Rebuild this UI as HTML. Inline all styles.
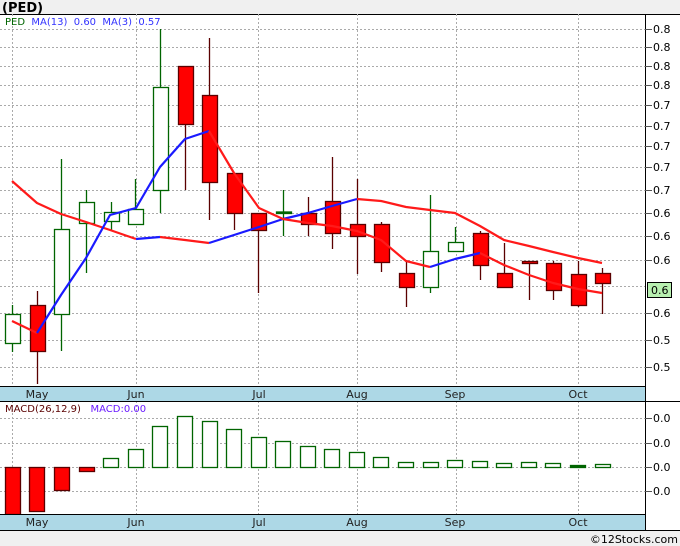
<!DOCTYPE html>
<html><head><style>
body{margin:0;background:#f0f0f0;}
svg{display:block;font-family:"DejaVu Sans","Liberation Sans",sans-serif;}
</style></head><body>
<svg width="680" height="546" viewBox="0 0 680 546" xmlns="http://www.w3.org/2000/svg">
<rect x="0" y="0" width="680" height="546" fill="#f0f0f0"/>
<text x="2" y="12" font-size="13" font-weight="bold" fill="#000">(PED)</text>
<rect x="0" y="14" width="680" height="516" fill="#fff"/>
<line x1="0" y1="14.5" x2="680" y2="14.5" stroke="#000"/>
<g stroke="#aaa" stroke-dasharray="2,2" stroke-width="1">
<line x1="0" x2="645" y1="29.5" y2="29.5"/><line x1="0" x2="645" y1="47.5" y2="47.5"/><line x1="0" x2="645" y1="66.5" y2="66.5"/><line x1="0" x2="645" y1="85.5" y2="85.5"/><line x1="0" x2="645" y1="105.5" y2="105.5"/><line x1="0" x2="645" y1="126.5" y2="126.5"/><line x1="0" x2="645" y1="146.5" y2="146.5"/><line x1="0" x2="645" y1="167.5" y2="167.5"/><line x1="0" x2="645" y1="190.5" y2="190.5"/><line x1="0" x2="645" y1="213.5" y2="213.5"/><line x1="0" x2="645" y1="236.5" y2="236.5"/><line x1="0" x2="645" y1="260.5" y2="260.5"/><line x1="0" x2="645" y1="286.5" y2="286.5"/><line x1="0" x2="645" y1="313.5" y2="313.5"/><line x1="0" x2="645" y1="340.5" y2="340.5"/><line x1="0" x2="645" y1="367.5" y2="367.5"/>
<line x1="0" x2="645" y1="418.5" y2="418.5"/><line x1="0" x2="645" y1="443.5" y2="443.5"/><line x1="0" x2="645" y1="467.5" y2="467.5"/><line x1="0" x2="645" y1="491.5" y2="491.5"/>
<g><line x1="12.5" x2="12.5" y1="14" y2="387"/><line x1="136.5" x2="136.5" y1="14" y2="387"/><line x1="258.5" x2="258.5" y1="14" y2="387"/><line x1="357.5" x2="357.5" y1="14" y2="387"/><line x1="456.5" x2="456.5" y1="14" y2="387"/><line x1="578.5" x2="578.5" y1="14" y2="387"/>
<line x1="12.5" x2="12.5" y1="401" y2="515"/><line x1="136.5" x2="136.5" y1="401" y2="515"/><line x1="258.5" x2="258.5" y1="401" y2="515"/><line x1="357.5" x2="357.5" y1="401" y2="515"/><line x1="456.5" x2="456.5" y1="401" y2="515"/><line x1="578.5" x2="578.5" y1="401" y2="515"/></g>
</g>
<text x="5" y="25" font-size="10" xml:space="preserve"><tspan fill="#006400">PED</tspan><tspan fill="#3333ff">  MA(13)  0.60  MA(3)  0.57</tspan></text>
<g stroke-width="1.3">
<line x1="12.5" x2="12.5" y1="305" y2="352" stroke="#006400"/>
<line x1="37.5" x2="37.5" y1="291" y2="384" stroke="#5a0000"/>
<line x1="61.5" x2="61.5" y1="159" y2="351" stroke="#006400"/>
<line x1="86.5" x2="86.5" y1="190" y2="273" stroke="#006400"/>
<line x1="111.5" x2="111.5" y1="202" y2="230" stroke="#006400"/>
<line x1="135.5" x2="135.5" y1="179" y2="224" stroke="#006400"/>
<line x1="160.5" x2="160.5" y1="29" y2="213" stroke="#006400"/>
<line x1="185.5" x2="185.5" y1="66" y2="190" stroke="#5a0000"/>
<line x1="209.5" x2="209.5" y1="38" y2="220" stroke="#5a0000"/>
<line x1="234.5" x2="234.5" y1="173" y2="230" stroke="#5a0000"/>
<line x1="258.5" x2="258.5" y1="213" y2="293" stroke="#5a0000"/>
<line x1="283.5" x2="283.5" y1="190" y2="236" stroke="#006400"/>
<line x1="308.5" x2="308.5" y1="197" y2="236" stroke="#5a0000"/>
<line x1="332.5" x2="332.5" y1="157" y2="249" stroke="#5a0000"/>
<line x1="357.5" x2="357.5" y1="179" y2="274" stroke="#5a0000"/>
<line x1="381.5" x2="381.5" y1="222" y2="272" stroke="#5a0000"/>
<line x1="406.5" x2="406.5" y1="262" y2="307" stroke="#5a0000"/>
<line x1="430.5" x2="430.5" y1="195" y2="293" stroke="#006400"/>
<line x1="455.5" x2="455.5" y1="227" y2="251" stroke="#006400"/>
<line x1="480.5" x2="480.5" y1="231" y2="280" stroke="#5a0000"/>
<line x1="504.5" x2="504.5" y1="243" y2="287" stroke="#5a0000"/>
<line x1="529.5" x2="529.5" y1="261" y2="300" stroke="#5a0000"/>
<line x1="553.5" x2="553.5" y1="261" y2="300" stroke="#5a0000"/>
<line x1="578.5" x2="578.5" y1="261" y2="307" stroke="#5a0000"/>
<line x1="602.5" x2="602.5" y1="268" y2="314" stroke="#5a0000"/>
</g>
<g stroke-width="1.3">
<g fill="#fff" stroke="#006400">
<rect x="5.5" y="314.5" width="15" height="29"/>
<rect x="54.5" y="229.5" width="15" height="85"/>
<rect x="79.5" y="202.5" width="15" height="21"/>
<rect x="104.5" y="212.5" width="15" height="9"/>
<rect x="128.5" y="209.5" width="15" height="15"/>
<rect x="153.5" y="87.5" width="15" height="103"/>
<rect x="276.5" y="212" width="15" height="1.5" fill="#006400"/>
<rect x="423.5" y="251.5" width="15" height="36"/>
<rect x="448.5" y="242.5" width="15" height="9"/>
</g>
<g fill="#ff0000" stroke="#5a0000">
<rect x="30.5" y="305.5" width="15" height="46"/>
<rect x="178.5" y="66.5" width="15" height="58"/>
<rect x="202.5" y="95.5" width="15" height="87"/>
<rect x="227.5" y="173.5" width="15" height="40"/>
<rect x="251.5" y="213.5" width="15" height="17"/>
<rect x="301.5" y="213.5" width="15" height="11"/>
<rect x="325.5" y="201.5" width="15" height="32"/>
<rect x="350.5" y="224.5" width="15" height="12"/>
<rect x="374.5" y="224.5" width="15" height="38"/>
<rect x="399.5" y="273.5" width="15" height="14"/>
<rect x="473.5" y="233.5" width="15" height="32"/>
<rect x="497.5" y="273.5" width="15" height="14"/>
<rect x="522.5" y="261.5" width="15" height="2"/>
<rect x="546.5" y="263.5" width="15" height="27"/>
<rect x="571.5" y="274.5" width="15" height="31"/>
<rect x="595.5" y="273.5" width="15" height="10"/>
</g>
</g>
<g fill="none" stroke-width="2.2" stroke-linejoin="round">
<polyline stroke="#ff1a1a" points="12,181 37,203 61,214 86,222 110,230 136,239"/>
<polyline stroke="#1a1aff" points="136,239 160,237"/>
<polyline stroke="#ff1a1a" points="160,237 185,240 209,243"/>
<polyline stroke="#1a1aff" points="209,243 234,235 259,227 283,219 308,213 332,206 357,199"/>
<polyline stroke="#ff1a1a" points="357,199 381,201 406,207 430,210 455,213 480,226 504,240 529,246 553,252 578,258 602,263"/>
<polyline stroke="#ff1a1a" points="12,321 37,333"/>
<polyline stroke="#1a1aff" points="37,333 61,295 86,258 110,215 136,208 160,167 185,139 209,131"/>
<polyline stroke="#ff1a1a" points="209,131 234,173 259,208 283,219 308,223 332,226 357,231 381,240 406,261 430,267"/>
<polyline stroke="#1a1aff" points="430,267 455,259 480,253"/>
<polyline stroke="#ff1a1a" points="480,253 504,265 529,275 553,283 578,289 602,293"/>
</g>
<text x="5" y="412" font-size="10" xml:space="preserve"><tspan fill="#5a0000">MACD(26,12,9)</tspan><tspan fill="#6a1aff">   MACD:0.00</tspan></text>
<g stroke-width="1.3">
<g fill="#ff0000" stroke="#5a0000">
<rect x="5.5" y="467.5" width="15" height="47"/>
<rect x="29.5" y="467.5" width="15" height="44"/>
<rect x="54.5" y="467.5" width="15" height="23"/>
<rect x="79.5" y="467.5" width="15" height="4"/>
</g>
<g fill="#fff" stroke="#006400">
<rect x="103.5" y="458.5" width="15" height="9"/>
<rect x="128.5" y="449.5" width="15" height="18"/>
<rect x="152.5" y="426.5" width="15" height="41"/>
<rect x="177.5" y="416.5" width="15" height="51"/>
<rect x="202.5" y="421.5" width="15" height="46"/>
<rect x="226.5" y="429.5" width="15" height="38"/>
<rect x="251.5" y="437.5" width="15" height="30"/>
<rect x="275.5" y="441.5" width="15" height="26"/>
<rect x="300.5" y="446.5" width="15" height="21"/>
<rect x="324.5" y="449.5" width="15" height="18"/>
<rect x="349.5" y="452.5" width="15" height="15"/>
<rect x="373.5" y="457.5" width="15" height="10"/>
<rect x="398.5" y="462.5" width="15" height="5"/>
<rect x="423.5" y="462.5" width="15" height="5"/>
<rect x="447.5" y="460.5" width="15" height="7"/>
<rect x="472.5" y="461.5" width="15" height="6"/>
<rect x="496.5" y="463.5" width="15" height="4"/>
<rect x="521.5" y="462.5" width="15" height="5"/>
<rect x="545.5" y="463.5" width="15" height="4"/>
<rect x="570.5" y="465.5" width="15" height="2" fill="#006400"/>
<rect x="595.5" y="464.5" width="15" height="3"/>
</g>
</g>
<rect x="0" y="387" width="645" height="14" fill="#add8e6"/>
<line x1="0" x2="645" y1="386.5" y2="386.5" stroke="#000"/>
<line x1="0" x2="680" y1="401.5" y2="401.5" stroke="#000"/>
<rect x="0" y="515" width="645" height="15" fill="#add8e6"/>
<line x1="0" x2="645" y1="514.5" y2="514.5" stroke="#000"/>
<line x1="0" x2="680" y1="530.5" y2="530.5" stroke="#000"/>
<g font-size="11" fill="#222" text-anchor="middle">
<text x="37" y="398">May</text><text x="136" y="398">Jun</text><text x="259" y="398">Jul</text><text x="357" y="398">Aug</text><text x="455" y="398">Sep</text><text x="578" y="398">Oct</text>
<text x="37" y="526">May</text><text x="136" y="526">Jun</text><text x="259" y="526">Jul</text><text x="357" y="526">Aug</text><text x="455" y="526">Sep</text><text x="578" y="526">Oct</text>
</g>
<line x1="645.5" x2="645.5" y1="14" y2="530" stroke="#000"/>
<g stroke="#555">
<line x1="645" x2="652" y1="29.5" y2="29.5"/><line x1="645" x2="652" y1="47.5" y2="47.5"/><line x1="645" x2="652" y1="66.5" y2="66.5"/><line x1="645" x2="652" y1="85.5" y2="85.5"/><line x1="645" x2="652" y1="105.5" y2="105.5"/><line x1="645" x2="652" y1="126.5" y2="126.5"/><line x1="645" x2="652" y1="146.5" y2="146.5"/><line x1="645" x2="652" y1="167.5" y2="167.5"/><line x1="645" x2="652" y1="190.5" y2="190.5"/><line x1="645" x2="652" y1="213.5" y2="213.5"/><line x1="645" x2="652" y1="236.5" y2="236.5"/><line x1="645" x2="652" y1="260.5" y2="260.5"/><line x1="645" x2="652" y1="313.5" y2="313.5"/><line x1="645" x2="652" y1="340.5" y2="340.5"/><line x1="645" x2="652" y1="367.5" y2="367.5"/>
<line x1="645" x2="652" y1="418.5" y2="418.5"/><line x1="645" x2="652" y1="443.5" y2="443.5"/><line x1="645" x2="652" y1="467.5" y2="467.5"/><line x1="645" x2="652" y1="491.5" y2="491.5"/>
</g>
<g font-size="11" fill="#000">
<text x="653" y="33">0.8</text><text x="653" y="51">0.8</text><text x="653" y="70">0.8</text><text x="653" y="89">0.8</text><text x="653" y="109">0.7</text><text x="653" y="130">0.7</text><text x="653" y="150">0.7</text><text x="653" y="171">0.7</text><text x="653" y="194">0.7</text><text x="653" y="217">0.6</text><text x="653" y="240">0.6</text><text x="653" y="264">0.6</text><text x="653" y="317">0.6</text><text x="653" y="344">0.5</text><text x="653" y="371">0.5</text>
<text x="653" y="422">0.0</text><text x="653" y="447">0.0</text><text x="653" y="471">0.0</text><text x="653" y="495">0.0</text>
</g>
<rect x="647.5" y="282.5" width="24" height="15" fill="#b8f0b0" stroke="#000"/>
<text x="651" y="294" font-size="11" fill="#000">0.6</text>
<text x="678" y="543" font-size="11" fill="#000" text-anchor="end">©12Stocks.com</text>
</svg>
</body></html>
